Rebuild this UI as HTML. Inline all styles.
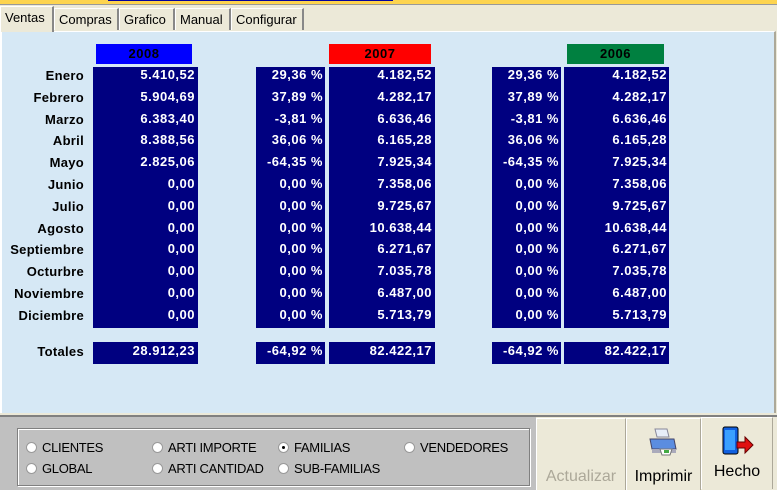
<!DOCTYPE html>
<html><head><meta charset="utf-8"><style>
*{margin:0;padding:0;box-sizing:border-box}
body{width:777px;height:490px;overflow:hidden;background:#ece9d8;font-family:"Liberation Sans",sans-serif;position:relative}
.a{position:absolute}
.tab{position:absolute;top:8px;height:22px;font-size:13px;padding:3px 0 0 4px;border-left:1px solid #fff;border-right:2px solid #888;border-top:1px solid #fff;background:#ece9d8;color:#000}
.blk{position:absolute;background:#000080}
.n{position:absolute;color:#fff;font-weight:bold;font-size:13px;text-align:right;letter-spacing:0.5px;height:22px;line-height:16px}
.lab{position:absolute;font-weight:bold;font-size:13px;text-align:right;width:84px;left:0;letter-spacing:0.3px;line-height:17px}
.hd{position:absolute;top:44px;height:20px;font-weight:bold;font-size:13px;text-align:center;line-height:19px;letter-spacing:0.5px}
.r{position:absolute;font-size:13px;color:#000;letter-spacing:-0.3px}
.r:before{content:"";display:inline-block;width:9px;height:9px;border-radius:50%;background:#fff;border:1px solid #999;margin-right:5px;vertical-align:-1px}
.r.on:after{content:"";position:absolute;left:4px;top:6px;width:3px;height:3px;border-radius:50%;background:#000}
.btn{position:absolute;top:418px;height:72px;background:#ece9d8;border-left:1px solid #fff;border-top:1px solid #fff;border-right:1px solid #aca899;font-size:16px;text-align:center}
</style></head><body>
<div class="a" style="left:0;top:0;width:777px;height:4px;background:#fdd44f"></div>
<div class="a" style="left:108px;top:0;width:285px;height:1px;background:#0000a0"></div>
<div class="a" style="left:0;top:4px;width:777px;height:1px;background:#999"></div>
<div class="tab" style="left:0;top:6px;width:54px;height:26px;z-index:2">Ventas</div>
<div class="tab" style="left:54px;width:65px">Compras</div>
<div class="tab" style="left:119px;width:56px">Grafico</div>
<div class="tab" style="left:175px;width:56px">Manual</div>
<div class="tab" style="left:231px;width:73px">Configurar</div>
<div class="a" style="left:0;top:31px;width:776px;height:382px;background:#d6e8f5;border-top:1px solid #fff;border-left:2px solid #fff;border-right:2px solid #aca899"></div>

<div class="hd" style="left:96px;width:96px;background:#0000ff">2008</div>
<div class="hd" style="left:329px;width:102px;background:#ff0000">2007</div>
<div class="hd" style="left:567px;width:97px;background:#008040">2006</div>

<div class="blk" style="left:93px;top:67px;width:105px;height:261px"></div>
<div class="blk" style="left:256px;top:67px;width:69px;height:261px"></div>
<div class="blk" style="left:329px;top:67px;width:106px;height:261px"></div>
<div class="blk" style="left:492px;top:67px;width:69px;height:261px"></div>
<div class="blk" style="left:564px;top:67px;width:105px;height:261px"></div>
<div class="blk" style="left:93px;top:342px;width:105px;height:22px"></div>
<div class="blk" style="left:256px;top:342px;width:69px;height:22px"></div>
<div class="blk" style="left:329px;top:342px;width:106px;height:22px"></div>
<div class="blk" style="left:492px;top:342px;width:69px;height:22px"></div>
<div class="blk" style="left:564px;top:342px;width:105px;height:22px"></div>

<div id="rows"></div>
<script>
var m=["Enero","Febrero","Marzo","Abril","Mayo","Junio","Julio","Agosto","Septiembre","Octurbre","Noviembre","Diciembre"];
var a=["5.410,52","5.904,69","6.383,40","8.388,56","2.825,06","0,00","0,00","0,00","0,00","0,00","0,00","0,00"];
var p=["29,36 %","37,89 %","-3,81 %","36,06 %","-64,35 %","0,00 %","0,00 %","0,00 %","0,00 %","0,00 %","0,00 %","0,00 %"];
var b=["4.182,52","4.282,17","6.636,46","6.165,28","7.925,34","7.358,06","9.725,67","10.638,44","6.271,67","7.035,78","6.487,00","5.713,79"];
var h="";
function row(y,l,x1,x2,x3){
h+='<div class="lab" style="top:'+(y)+'px">'+l+'</div>';
h+='<div class="n" style="left:93px;width:102px;top:'+y+'px">'+x1+'</div>';
h+='<div class="n" style="left:256px;width:67px;top:'+y+'px">'+x2+'</div>';
h+='<div class="n" style="left:329px;width:103px;top:'+y+'px">'+x3+'</div>';
h+='<div class="n" style="left:492px;width:67px;top:'+y+'px">'+x2+'</div>';
h+='<div class="n" style="left:564px;width:103px;top:'+y+'px">'+x3+'</div>';}
for(var i=0;i<12;i++)row(67+i*21.8,m[i],a[i],p[i],b[i]);
row(343,"Totales","28.912,23","-64,92 %","82.422,17");
document.getElementById("rows").innerHTML=h;
</script>

<div class="a" style="left:0;top:413px;width:777px;height:2px;background:#ece9d8"></div>
<div class="a" style="left:0;top:415px;width:777px;height:2px;background:#808080"></div>
<div class="a" style="left:0;top:417px;width:536px;height:73px;background:#c0c0c0"></div>
<div class="a" style="left:17px;top:428px;width:513px;height:58px;border:1px solid #808080;box-shadow:inset 1px 1px 0 #fff,1px 1px 0 #fff"></div>
<div class="r" style="left:26px;top:440px">CLIENTES</div>
<div class="r" style="left:152px;top:440px">ARTI IMPORTE</div>
<div class="r on" style="left:278px;top:440px">FAMILIAS</div>
<div class="r" style="left:404px;top:440px">VENDEDORES</div>
<div class="r" style="left:26px;top:461px">GLOBAL</div>
<div class="r" style="left:152px;top:461px">ARTI CANTIDAD</div>
<div class="r" style="left:278px;top:461px">SUB-FAMILIAS</div>

<div class="btn" style="left:536px;width:90px;color:#aca899;padding-top:49px">Actualizar</div>
<div class="btn" style="left:626px;width:75px;padding-top:49px">Imprimir
<svg class="a" style="left:20px;top:8px" width="32" height="30" viewBox="0 0 32 30"><path d="M8 2h12l2 8H10z" fill="#e8eef8" stroke="#889"/><path d="M3 12h24l2 10H5z" fill="#5b8de0" stroke="#446"/><path d="M5 22h24v4H5z" fill="#aab"/><path d="M13 22h12l-2 6H15z" fill="#fff" stroke="#777"/><rect x="17" y="23" width="5" height="3" fill="#4a4"/></svg></div>
<div class="btn" style="left:701px;width:72px;padding-top:45px;top:417px">Hecho
<svg class="a" style="left:18px;top:8px" width="36" height="30" viewBox="0 0 36 30"><rect x="3" y="1" width="15" height="27" rx="2" fill="#1060e0" stroke="#000"/><rect x="5" y="4" width="10" height="20" fill="#3aa0ff"/><path d="M17 16h8v-5l8 8-8 8v-5h-8z" fill="#e01010" stroke="#600"/></svg></div>
</body></html>
